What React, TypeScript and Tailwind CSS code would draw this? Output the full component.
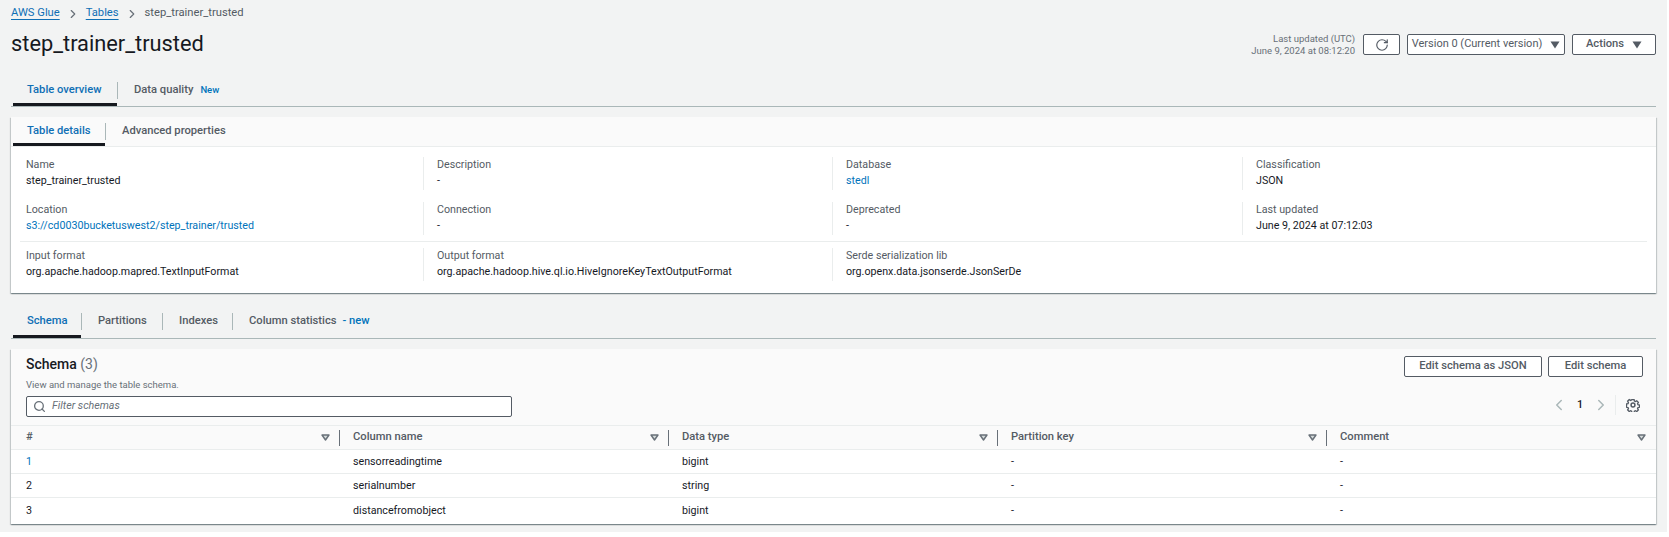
import React from "react";
import { ChevronRight, ChevronLeft, RotateCw, Search } from "lucide-react";

const Caret = () => (
  <svg width="10" height="8" viewBox="0 0 10 8" className="shrink-0">
    <path d="M0.5 0.5H9.5L5 7.5Z" fill="#545b64" />
  </svg>
);

const SortIcon = () => (
  <svg width="9" height="7" viewBox="0 0 9 7" className="shrink-0">
    <path d="M1 1H8L4.5 6Z" fill="#d5dbdb" stroke="#687078" strokeWidth="1.4" strokeLinejoin="round" />
  </svg>
);

const Gear = () => (
  <svg width="14" height="14" viewBox="0 0 16 16" fill="none" stroke="#545b64" strokeWidth="1.7">
    <path d="M6.6 1.2h2.8l.4 1.9 1.3.6 1.7-1 2 2-1 1.7.5 1.3 1.9.4v2.8l-1.9.4-.5 1.3 1 1.7-2 2-1.7-1-1.3.5-.4 1.9H6.6l-.4-1.9-1.3-.5-1.7 1-2-2 1-1.7-.5-1.3-1.9-.4V6.6l1.9-.4.5-1.3-1-1.7 2-2 1.7 1 1.3-.6z" transform="translate(0.8 0.8) scale(0.9)" />
    <circle cx="8" cy="8" r="2.2" />
  </svg>
);

const Tab = ({ w, active, children }: { w: string; active?: boolean; children: React.ReactNode }) => (
  <div
    className={`${w} ml-[2px] h-full flex items-center pl-[14px] pt-[3px] border-b-[3px] font-medium whitespace-nowrap text-[11.2px] ${
      active ? "border-[#16191f] text-[#0f6fb5]" : "border-transparent text-[#545b64]"
    }`}
  >
    {children}
  </div>
);

const Sep = () => <div className="w-px h-[17px] bg-[#aab7b8] self-center shrink-0" />;

const Field = ({ label, value, link, first }: { label: string; value: string; link?: boolean; first?: boolean }) => (
  <div className={`h-[33px] flex flex-col gap-px ${first ? "pl-[15px]" : "pl-[13px] border-l border-[#eaeded]"}`}>
    <div className="text-[#545b64] leading-[15px]">{label}</div>
    <div className={`leading-[15px] ${link ? "text-[#0073bb]" : "text-[#16191f]"}`}>{value}</div>
  </div>
);

const detailCols = "grid grid-cols-[412px_409px_410px_1fr]";
const middleCols = "grid grid-cols-[403px_409px_410px_1fr]";
const tableCols = "grid grid-cols-[328px_329px_329px_329px_1fr]";

const Header = ({ label, first, last }: { label: string; first?: boolean; last?: boolean }) => (
  <div className={`flex items-center h-[16px] self-center ${first ? "pl-[15px]" : "pl-[13px] border-l border-[#687078]"} ${last ? "pr-[10px]" : "pr-[9px]"}`}>
    <span className="font-medium text-[#545b64] flex-1 text-[11.2px]">{label}</span>
    <SortIcon />
  </div>
);

const rows = [
  ["1", "sensorreadingtime", "bigint"],
  ["2", "serialnumber", "string"],
  ["3", "distancefromobject", "bigint"],
];

export default function App() {
  return (
    <div className="h-[537px] bg-white overflow-hidden font-['Roboto','Open_Sans',sans-serif] text-[10.7px]">
      <div className="w-[1667px] h-[532px] bg-[#f2f3f3] overflow-hidden">
        <div className="h-[27px] pl-[11px] flex items-center text-[#545b64] text-[11.2px]">
          <span className="text-[#0f6fb5] underline underline-offset-[3px]">AWS Glue</span>
          <ChevronRight size={14} className="mx-[6px]" color="#687078" />
          <span className="text-[#0f6fb5] underline underline-offset-[3px]">Tables</span>
          <ChevronRight size={14} className="mx-[6px]" color="#687078" />
          <span>step_trainer_trusted</span>
        </div>

        <div className="h-[35px] px-[11px] flex items-center">
          <h1 className="text-[21.8px] text-[#16191f] flex-1">step_trainer_trusted</h1>
          <div className="text-right text-[9.5px] leading-[12px] text-[#687078] mr-2">
            <div>Last updated (UTC)</div>
            <div>June 9, 2024 at 08:12:20</div>
          </div>
          <div className="w-[37px] h-[21px] bg-white border border-[#545b64] rounded-[2px] flex items-center justify-center">
            <RotateCw size={14} color="#545b64" />
          </div>
          <div className="w-[158px] h-[21px] ml-[7px] bg-white border border-[#545b64] rounded-[2px] flex items-center justify-center gap-2 text-[#545b64] text-[11px]">
            <span>Version 0 (Current version)</span>
            <Caret />
          </div>
          <div className="w-[84px] h-[21px] ml-[7px] bg-white border border-[#545b64] rounded-[2px] flex items-center justify-center gap-2 font-medium text-[#545b64] text-[11.2px]">
            <span>Actions</span>
            <Caret />
          </div>
        </div>

        <div className="h-[33px] mt-3 mx-[11px] flex border-b border-[#aab7b8]">
          <Tab w="w-[104px]" active>Table overview</Tab>
          <Sep />
          <Tab w="w-[138px]">
            Data quality<span className="ml-[7px] text-[9.5px] text-[#0073bb]">New</span>
          </Tab>
        </div>

        <div className="mt-[10px] mx-[11px] h-[176px] bg-white shadow-[0_1px_1px_rgba(0,28,36,0.3),1px_1px_1px_rgba(0,28,36,0.15),-1px_1px_1px_rgba(0,28,36,0.15)]">
          <div className="h-[30px] bg-[#fafafa] border-b border-[#eaeded] flex">
            <Tab w="w-[92px]" active>Table details</Tab>
            <Sep />
            <Tab w="w-[160px]">Advanced properties</Tab>
          </div>
          <div className="pt-[10px]">
            <div className={detailCols}>
              <Field first label="Name" value="step_trainer_trusted" />
              <Field label="Description" value="-" />
              <Field label="Database" value="stedl" link />
              <Field label="Classification" value="JSON" />
            </div>
            <div className={`${middleCols} mt-[12px] pb-[6px] border-b border-[#eaeded] mx-[9px]`}>
              <div className="-ml-[9px]">
                <Field first label="Location" value="s3://cd0030bucketuswest2/step_trainer/trusted" link />
              </div>
              <Field label="Connection" value="-" />
              <Field label="Deprecated" value="-" />
              <Field label="Last updated" value="June 9, 2024 at 07:12:03" />
            </div>
            <div className={`${detailCols} mt-[6px]`}>
              <Field first label="Input format" value="org.apache.hadoop.mapred.TextInputFormat" />
              <Field label="Output format" value="org.apache.hadoop.hive.ql.io.HiveIgnoreKeyTextOutputFormat" />
              <Field label="Serde serialization lib" value="org.openx.data.jsonserde.JsonSerDe" />
            </div>
          </div>
        </div>

        <div className="h-[34px] mt-[12px] mx-[11px] flex border-b border-[#aab7b8]">
          <Tab w="w-[68px]" active>Schema</Tab>
          <Sep />
          <Tab w="w-[78px]">Partitions</Tab>
          <Sep />
          <Tab w="w-[67px]">Indexes</Tab>
          <Sep />
          <Tab w="w-[180px]">
            Column statistics<span className="ml-[6px] text-[#0073bb]">- new</span>
          </Tab>
        </div>

        <div className="mt-[10px] mx-[11px] h-[175px] bg-white shadow-[0_1px_1px_rgba(0,28,36,0.3),1px_1px_1px_rgba(0,28,36,0.15),-1px_1px_1px_rgba(0,28,36,0.15)]">
          <div className="h-[77px] bg-[#fafafa] border-b border-[#eaeded] pl-[15px] pr-[13px] flex">
            <div className="flex-1 pt-[6px]">
              <div className="text-[14px] leading-[18px] font-medium text-[#16191f]">
                Schema <span className="font-normal text-[#687078]">(3)</span>
              </div>
              <div className="text-[9.5px] leading-[12px] mt-[6px] text-[#687078]">View and manage the table schema.</div>
              <div className="w-[486px] h-[21px] mt-[5px] bg-white border border-[#545b64] rounded-[2px] flex items-center pl-[6px]">
                <Search size={13} color="#687078" strokeWidth={2.4} />
                <span className="ml-[6px] italic text-[#687078]">Filter schemas</span>
              </div>
            </div>
            <div className="flex flex-col items-end pt-[7px]">
              <div className="flex gap-[6px]">
                <div className="w-[138px] h-[21px] bg-white border border-[#545b64] rounded-[2px] flex items-center justify-center font-medium text-[#545b64] text-[11.2px]">Edit schema as JSON</div>
                <div className="w-[95px] h-[21px] bg-white border border-[#545b64] rounded-[2px] flex items-center justify-center font-medium text-[#545b64] text-[11.2px]">Edit schema</div>
              </div>
              <div className="flex items-center mt-[18px] mr-[3px] h-[20px]">
                <ChevronLeft size={18} color="#aab7b8" />
                <span className="mx-[9px] font-medium text-[#16191f]">1</span>
                <ChevronRight size={18} color="#aab7b8" />
                <div className="w-px h-[20px] bg-[#eaeded] ml-[5px] mr-[10px]" />
                <Gear />
              </div>
            </div>
          </div>

          <div className={`${tableCols} h-[24px] bg-[#fafafa] border-b border-[#eaeded]`}>
            <Header first label="#" />
            <Header label="Column name" />
            <Header label="Data type" />
            <Header label="Partition key" />
            <Header last label="Comment" />
          </div>

          {rows.map((r, i) => (
            <div key={r[0]} className={`${tableCols} h-[24px] pt-[2px] items-center text-[#16191f] ${i < 2 ? "border-b border-[#eaeded]" : ""}`}>
              <div className={`pl-[15px] ${i === 0 ? "text-[#0073bb]" : ""}`}>{r[0]}</div>
              <div className="pl-[14px]">{r[1]}</div>
              <div className="pl-[14px]">{r[2]}</div>
              <div className="pl-[14px]">-</div>
              <div className="pl-[14px]">-</div>
            </div>
          ))}
        </div>
      </div>
    </div>
  );
}
